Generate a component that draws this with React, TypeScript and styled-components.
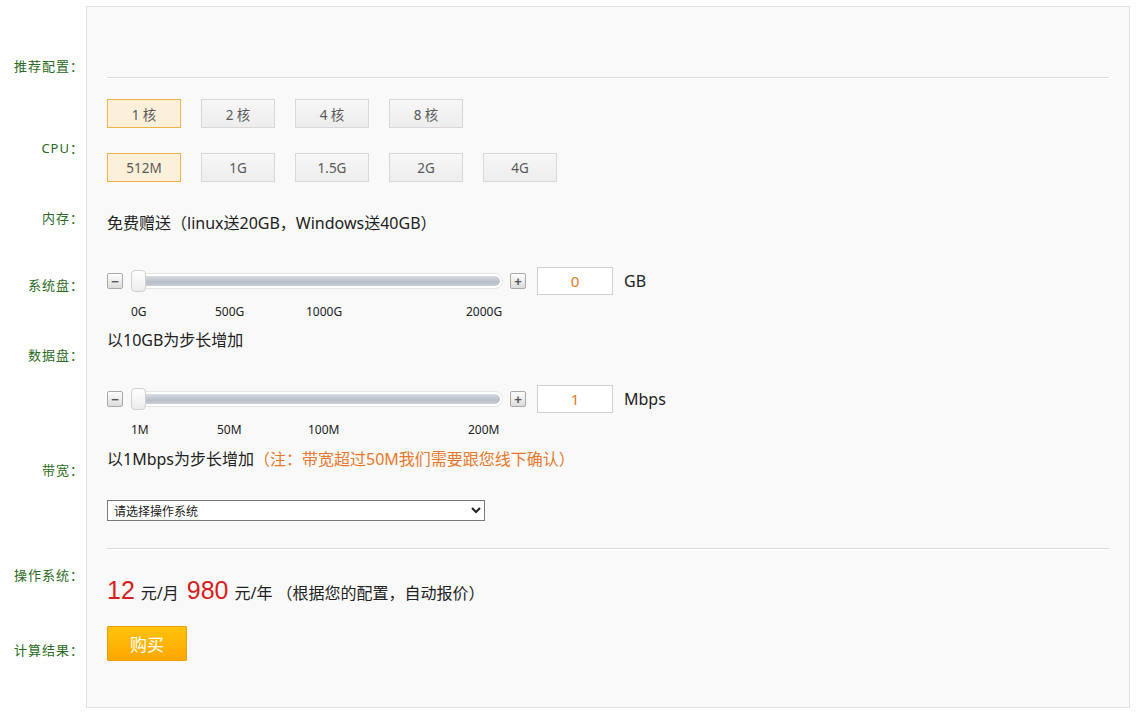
import React from 'react';
import styled, { createGlobalStyle } from 'styled-components';

const GlobalStyle = createGlobalStyle`
body {
  margin: 0;
  background: #fff;
  font-family: "Noto Sans", "Noto Sans CJK SC", sans-serif;
  color: #222;
}
`;

const Page = styled.div`
display: flex;
align-items: flex-start;
padding-top: 6px;
width: 1139px;
`;

const LabelColumn = styled.div`
width: 86px;
display: flex;
flex-direction: column;
align-items: flex-end;
padding-right: 2px;
box-sizing: border-box;
margin-top: -6px;
`;

const Label = styled.div<{ top: number }>`
margin-top: ${props => props.top}px;
height: 16px;
line-height: 16px;
font-size: 13px;
letter-spacing: 1px;
color: #2a6a22;
white-space: nowrap;
`;

const Panel = styled.div`
width: 1044px;
height: 702px;
box-sizing: border-box;
background: #f9f9f9;
border: 1px solid #e1e1e1;
padding: 0 20px;
display: flex;
flex-direction: column;
`;

const Divider = styled.div<{ top: number }>`
margin-top: ${props => props.top}px;
height: 1px;
background: #dcdcdc;
box-shadow: 0 1px 0 #fff;
`;

const OptionRow = styled.div<{ top: number }>`
margin-top: ${props => props.top}px;
display: flex;
gap: 20px;
`;

const Option = styled.div<{ active?: boolean }>`
width: 74px;
height: 29px;
box-sizing: border-box;
display: flex;
align-items: center;
justify-content: center;
font-size: 13.5px;
color: #5a5a5a;
border: 1px solid ${props => props.active ? '#f2b143' : '#d7d7d7'};
background: ${props => props.active ? '#fdf0da' : 'linear-gradient(#f7f7f7, #ededed)'};
cursor: pointer;
`;

const Text = styled.div<{ top: number }>`
margin-top: ${props => props.top}px;
font-size: 16px;
line-height: 24px;
height: 24px;
white-space: nowrap;
`;

const Note = styled.span`
color: #e8782a;
`;

const SliderRow = styled.div<{ top: number }>`
margin-top: ${props => props.top}px;
display: flex;
align-items: center;
height: 28px;
`;

const StepButton = styled.div`
width: 16px;
height: 16px;
box-sizing: border-box;
border: 1px solid #a9a9a9;
border-radius: 2px;
background: linear-gradient(#fdfdfd, #dcdcdc);
display: flex;
align-items: center;
justify-content: center;
font-size: 13px;
line-height: 1;
color: #555;
font-family: "Liberation Sans", sans-serif;
font-weight: bold;
`;

const Track = styled.div`
margin: 0 7px 0 8px;
width: 372px;
height: 16px;
box-sizing: border-box;
border-radius: 8px;
background: #fff;
border: 1px solid #e4e4e4;
display: flex;
align-items: center;
padding: 0 2px 0 0;
`;

const TrackFill = styled.div`
flex: 1;
height: 10px;
border-radius: 5px;
background: linear-gradient(#d8dce3, #b8bec8 60%, #c9ced6);
`;

const Thumb = styled.div`
width: 15px;
height: 22px;
box-sizing: border-box;
border: 1px solid #d0d0d0;
border-radius: 4px;
background: linear-gradient(#ffffff, #ececec);
margin-left: -1px;
margin-right: -6px;
position: relative;
z-index: 1;
`;

const ValueBox = styled.div`
margin-left: 11px;
width: 76px;
height: 28px;
box-sizing: border-box;
border: 1px solid #cfcfcf;
background: #fff;
display: flex;
align-items: center;
justify-content: center;
font-size: 15px;
color: #e07b2e;
`;

const Unit = styled.div`
margin-left: 11px;
font-size: 16px;
color: #222;
`;

const TickRow = styled.div<{ top: number }>`
margin-top: ${props => props.top}px;
display: flex;
padding-left: 24px;
height: 16px;
line-height: 16px;
font-size: 12px;
color: #222;
`;

const Tick = styled.div<{ w: number }>`
width: ${props => props.w}px;
`;

const OsSelect = styled.select`
margin-top: 29px;
width: 378px;
height: 21px;
box-sizing: border-box;
border: 1px solid #777;
border-radius: 0;
background: #fff;
font-size: 12px;
font-family: "Noto Sans CJK SC", sans-serif;
color: #222;
padding: 0 2px;
`;

const PriceRow = styled.div`
margin-top: 27px;
height: 32px;
display: flex;
align-items: baseline;
font-size: 16px;
white-space: nowrap;
`;

const Amount = styled.span`
font-family: "Liberation Sans", Arial, sans-serif;
font-size: 25px;
color: #d81e1e;
margin-right: 6px;
`;

const Per = styled.span`
margin-right: 8px;
`;

const Remark = styled.span`
margin-left: 4px;
`;

const BuyButton = styled.button`
margin-top: 18px;
width: 80px;
height: 35px;
border: 1px solid #eba000;
border-radius: 1px;
background: linear-gradient(#ffc30c, #ffa600);
color: #fff;
font-size: 17px;
font-family: "Noto Sans CJK SC", sans-serif;
cursor: pointer;
padding: 0;
`;

const labels = [
  { text: '推荐配置：', top: 58 },
  { text: 'CPU：', top: 66 },
  { text: '内存：', top: 54 },
  { text: '系统盘：', top: 51 },
  { text: '数据盘：', top: 54 },
  { text: '带宽：', top: 99 },
  { text: '操作系统：', top: 89 },
  { text: '计算结果：', top: 59 },
];

const cpus = ['1 核', '2 核', '4 核', '8 核'];
const mems = ['512M', '1G', '1.5G', '2G', '4G'];

function Slider(props: { top: number; value: string; unit: string }) {
  return (
    <SliderRow top={props.top}>
      <StepButton>−</StepButton>
      <Track>
        <Thumb />
        <TrackFill />
      </Track>
      <StepButton>+</StepButton>
      <ValueBox>{props.value}</ValueBox>
      <Unit>{props.unit}</Unit>
    </SliderRow>
  );
}

export default function App() {
  return (
    <Page>
      <GlobalStyle />
      <LabelColumn>
        {labels.map(l => <Label key={l.text} top={l.top}>{l.text}</Label>)}
      </LabelColumn>
      <Panel>
        <Divider top={70} />
        <OptionRow top={21}>
          {cpus.map((c, i) => <Option key={c} active={i === 0}>{c}</Option>)}
        </OptionRow>
        <OptionRow top={25}>
          {mems.map((m, i) => <Option key={m} active={i === 0}>{m}</Option>)}
        </OptionRow>
        <Text top={29}>免费赠送（linux送20GB，Windows送40GB）</Text>
        <Slider top={32} value="0" unit="GB" />
        <TickRow top={9}>
          <Tick w={84}>0G</Tick>
          <Tick w={91}>500G</Tick>
          <Tick w={160}>1000G</Tick>
          <Tick w={60}>2000G</Tick>
        </TickRow>
        <Text top={8}>以10GB为步长增加</Text>
        <Slider top={33} value="1" unit="Mbps" />
        <TickRow top={9}>
          <Tick w={86}>1M</Tick>
          <Tick w={91}>50M</Tick>
          <Tick w={160}>100M</Tick>
          <Tick w={60}>200M</Tick>
        </TickRow>
        <Text top={9}>以1Mbps为步长增加<Note>（注：带宽超过50M我们需要跟您线下确认）</Note></Text>
        <div>
          <OsSelect defaultValue="">
            <option value="">请选择操作系统</option>
            <option value="linux">Linux</option>
            <option value="windows">Windows</option>
          </OsSelect>
        </div>
        <Divider top={27} />
        <PriceRow>
          <Amount>12</Amount>
          <Per>元/月</Per>
          <Amount>980</Amount>
          <span>元/年</span>
          <Remark>（根据您的配置，自动报价）</Remark>
        </PriceRow>
        <div>
          <BuyButton>购买</BuyButton>
        </div>
      </Panel>
    </Page>
  );
}
